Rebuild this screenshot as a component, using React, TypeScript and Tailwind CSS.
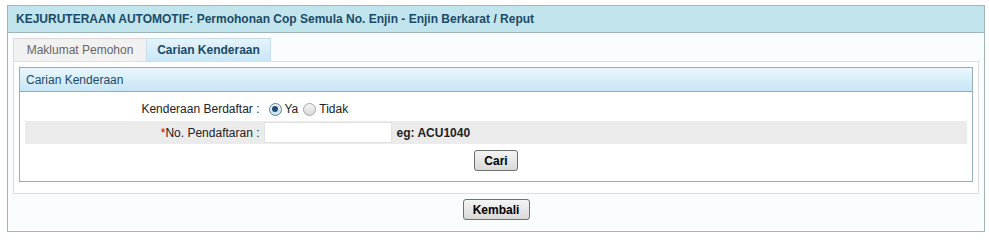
export default function App() {
  return (
    <div className="min-h-screen bg-white pt-[5px] pl-[7px] pr-[4px] font-['Liberation_Sans',Arial,sans-serif] text-[12px] text-[#222]">
      <div className="h-[227px] border border-[#9fb5ba] bg-[#fafdfe]">
        <div className="flex h-[27px] items-center border-b border-[#9fb5ba] bg-[#c2e4ec] px-[8px] font-bold text-[#1b4a68]">
          KEJURUTERAAN AUTOMOTIF: Permohonan Cop Semula No. Enjin - Enjin Berkarat / Reput
        </div>

        <div className="px-[5px] pt-[5px]">
          <div className="flex h-[23px] items-end">
            <div className="flex h-[23px] w-[133px] items-center justify-center border-t border-l border-[#dcdcdc] bg-[#f1f1f1] text-[#666]">
              Maklumat Pemohon
            </div>
            <div className="flex h-[23px] w-[125px] items-center justify-center border-t border-x border-[#c9dde6] bg-gradient-to-b from-[#e4f4fc] to-[#c9e7f6] font-bold text-[#1b4a68]">
              Carian Kenderaan
            </div>
          </div>

          <div className="h-[133px] border border-[#dedede] bg-white px-[5px] pt-[5px]">
            <div className="border border-[#95adb4]">
              <div className="flex h-[24px] items-center border-b border-[#95adb4] bg-gradient-to-b from-[#eaf7fd] to-[#c6e6f6] px-[6px] text-[#1b4a68]">
                Carian Kenderaan
              </div>
              <div className="px-[5px] pt-[5px] pb-[10px]">
                <div className="grid h-[24px] grid-cols-[25%_1fr] items-center">
                  <div className="pr-[1px] text-right">Kenderaan Berdaftar :</div>
                  <div className="flex items-center gap-[3px] pl-[8px]">
                    <span className="inline-flex h-[13px] w-[13px] items-center justify-center rounded-full border border-[#5a7f99] bg-gradient-to-b from-[#f4f8fb] to-[#cfdde8]">
                      <span className="h-[6px] w-[6px] rounded-full bg-[#1f4e78]" />
                    </span>
                    <span className="mr-[2px]">Ya</span>
                    <span className="inline-block h-[13px] w-[13px] rounded-full border border-[#a6a6a6] bg-gradient-to-b from-[#f6f6f6] to-[#d8d8d8]" />
                    <span>Tidak</span>
                  </div>
                </div>
                <div className="grid h-[23px] grid-cols-[25%_1fr] items-center bg-[#ebebeb]">
                  <div className="pr-[1px] text-right">
                    <span className="text-[#d00]">*</span>No. Pendaftaran :
                  </div>
                  <div className="flex items-center gap-[5px] pl-[3px]">
                    <div className="h-[21px] w-[128px] border border-[#e2e2e2] bg-white" />
                    <span className="font-bold">eg: ACU1040</span>
                  </div>
                </div>
                <div className="flex justify-center pt-[6px]">
                  <button className="h-[21px] w-[44px] rounded-[3px] border border-[#707070] bg-gradient-to-b from-[#f4f4f4] to-[#d9d9d9] font-bold text-black">
                    Cari
                  </button>
                </div>
              </div>
            </div>
          </div>
        </div>

        <div className="flex justify-center pt-[5px]">
          <button className="h-[21px] w-[67px] rounded-[3px] border border-[#707070] bg-gradient-to-b from-[#f4f4f4] to-[#d9d9d9] font-bold text-black">
            Kembali
          </button>
        </div>
      </div>
    </div>
  );
}
